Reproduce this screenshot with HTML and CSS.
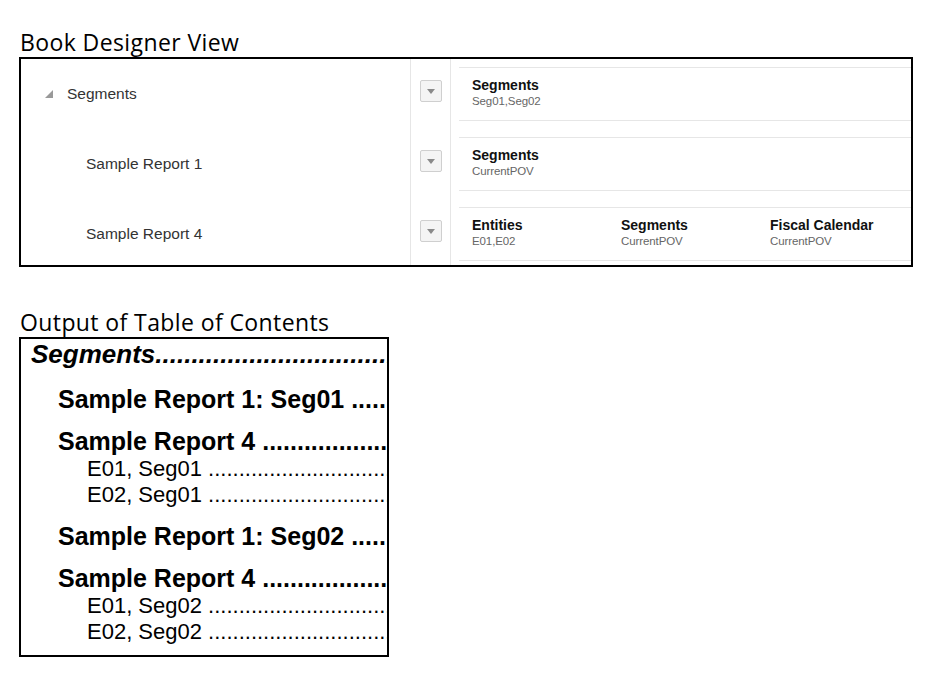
FILE: index.html
```html
<!DOCTYPE html>
<html lang="en">
<head>
    <meta charset="UTF-8">
    <meta name="viewport" content="width=device-width, initial-scale=1.0">
    <title>Book Designer View</title>
    <link rel="stylesheet" href="styles.css">
</head>
<body>
    <div class="caption">Book Designer View</div>

    <div class="designer">
        <div class="tree">
            <div class="tree-row">
                <svg class="twisty" width="8" height="8" viewBox="0 0 8 8"><polygon points="8,0 8,8 0,8"/></svg>
                <span>Segments</span>
            </div>
            <div class="tree-row child">Sample Report 1</div>
            <div class="tree-row child">Sample Report 4</div>
        </div>

        <div class="actions">
            <div class="action-row"><span class="menu-btn"><svg width="8" height="5" viewBox="0 0 8 5"><polygon points="0,0 8,0 4,5"/></svg></span></div>
            <div class="action-row"><span class="menu-btn"><svg width="8" height="5" viewBox="0 0 8 5"><polygon points="0,0 8,0 4,5"/></svg></span></div>
            <div class="action-row"><span class="menu-btn"><svg width="8" height="5" viewBox="0 0 8 5"><polygon points="0,0 8,0 4,5"/></svg></span></div>
        </div>

        <div class="pov">
            <div class="pov-row">
                <div class="pov-card">
                    <div class="pov-item"><div class="dim">Segments</div><div class="mbr">Seg01,Seg02</div></div>
                </div>
            </div>
            <div class="pov-row">
                <div class="pov-card">
                    <div class="pov-item"><div class="dim">Segments</div><div class="mbr">CurrentPOV</div></div>
                </div>
            </div>
            <div class="pov-row">
                <div class="pov-card">
                    <div class="pov-item"><div class="dim">Entities</div><div class="mbr">E01,E02</div></div>
                    <div class="pov-item"><div class="dim">Segments</div><div class="mbr">CurrentPOV</div></div>
                    <div class="pov-item"><div class="dim">Fiscal Calendar</div><div class="mbr">CurrentPOV</div></div>
                </div>
            </div>
        </div>
    </div>

    <div class="caption second">Output of Table of Contents</div>

    <div class="toc">
        <div class="toc-top">Segments..........................................</div>
        <div class="toc-l2 first">Sample Report 1: Seg01 ....................................</div>
        <div class="toc-l2">Sample Report 4 ....................................................</div>
        <div class="toc-l3">E01, Seg01 ...........................................................</div>
        <div class="toc-l3">E02, Seg01 ...........................................................</div>
        <div class="toc-l2">Sample Report 1: Seg02 ....................................</div>
        <div class="toc-l2">Sample Report 4 ....................................................</div>
        <div class="toc-l3">E01, Seg02 ...........................................................</div>
        <div class="toc-l3">E02, Seg02 ...........................................................</div>
    </div>
</body>
</html>
```

FILE: styles.css
```css
body {
    margin: 0;
    padding: 28px 19px 0 19px;
    background-color: white;
    color: #000;
}

.caption {
    font-family: "Open Sans", sans-serif;
    font-size: 23px;
    letter-spacing: 0.4px;
    line-height: 29px;
    padding-left: 1px;
}

.caption.second {
    margin-top: 40px;
    line-height: 30px;
}

.designer {
    display: flex;
    width: 890px;
    height: 206px;
    border: 2px solid #000;
    overflow: hidden;
    font-family: "Liberation Sans", Arial, sans-serif;
}

.tree {
    width: 389px;
    border-right: 1px solid #e6e6e6;
}

.tree-row {
    display: flex;
    align-items: center;
    height: 70px;
    padding-left: 24px;
    font-size: 15.5px;
    color: #333;
}

.tree-row.child {
    padding-left: 65px;
}

.twisty {
    fill: #999;
    margin-right: 14px;
}

.actions {
    width: 39px;
    border-right: 1px solid #e6e6e6;
}

.action-row {
    height: 70px;
    padding: 21px 0 0 9px;
    box-sizing: border-box;
}

.menu-btn {
    display: flex;
    justify-content: center;
    align-items: center;
    width: 22px;
    height: 22px;
    box-sizing: border-box;
    border: 1px solid #cfcfcf;
    border-radius: 2px;
    background-color: #f4f4f4;
}

.menu-btn svg {
    fill: #8a8a8a;
}

.pov {
    flex: 1;
    padding-left: 8px;
}

.pov-row {
    height: 70px;
    padding: 8px 0;
    box-sizing: border-box;
}

.pov-card {
    display: flex;
    height: 54px;
    box-sizing: border-box;
    border-top: 1px solid #e6e6e6;
    border-bottom: 1px solid #e6e6e6;
    padding-top: 9px;
}

.pov-item {
    width: 149px;
    padding-left: 13px;
    box-sizing: border-box;
}

.dim {
    font-size: 14px;
    line-height: 17px;
    font-weight: bold;
    color: #111;
}

.mbr {
    font-size: 11.5px;
    line-height: 15px;
    color: #666;
    letter-spacing: -0.1px;
}

.toc {
    width: 366px;
    height: 315px;
    border: 2px solid #000;
    overflow: hidden;
    white-space: nowrap;
    font-family: "Liberation Sans", Arial, sans-serif;
    padding-top: 1px;
    box-sizing: content-box;
}

.toc-top {
    font-size: 26px;
    line-height: 28px;
    font-weight: bold;
    font-style: italic;
    padding-left: 10px;
}

.toc-l2 {
    font-size: 25px;
    line-height: 28px;
    font-weight: bold;
    padding-left: 37px;
    margin-top: 14px;
}

.toc-l2.first {
    margin-top: 17px;
}

.toc-l3 {
    font-size: 22px;
    line-height: 26px;
    padding-left: 66px;
}

.toc-l2 + .toc-l3 {
    margin-top: 1px;
}
```
